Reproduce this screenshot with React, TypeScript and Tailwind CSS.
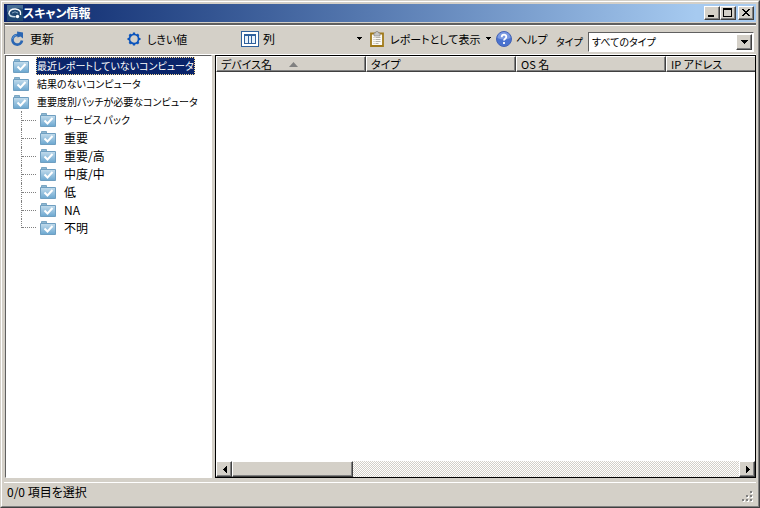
import type { ReactNode } from 'react'

const columns = ['デバイス名', 'タイプ', 'OS 名', 'IP アドレス']
const topFolders = ['最近レポートしていないコンピュータ', '結果のないコンピュータ', '重要度別パッチが必要なコンピュータ']
const severities = ['サービス パック', '重要', '重要/高', '中度/中', '低', 'NA', '不明']

const raised = 'border border-t-white border-l-white border-r-[#404040] border-b-[#404040] bg-[#d4d0c8] shadow-[inset_-1px_-1px_0_#808080]'

function FolderIcon() {
  return (
    <svg className="h-4 w-4 shrink-0" viewBox="0 0 16 16" aria-hidden="true">
      <defs>
        <linearGradient id="folder" x1="0" y1="0" x2="0" y2="1">
          <stop offset="0" stopColor="#c3dcec" />
          <stop offset="1" stopColor="#6ba7d0" />
        </linearGradient>
      </defs>
      <path d="M1.5 4V1.500h5V4" fill="#8eb8d3" stroke="#7ba6c2" />
      <path d="M.5 3.500h15v11H.5z" fill="url(#folder)" stroke="#6f9fc1" />
      <path d="m4.500 8.500 3 3L12.500 6" fill="none" stroke="#fff" strokeWidth="2" />
    </svg>
  )
}

function AppIcon() {
  return (
    <svg className="h-4 w-4 shrink-0" viewBox="0 0 16 16" aria-hidden="true">
      <path d="M0 0h16v16H0z" fill="#1d4670" />
      <path d="M0 0h16v4Q8 1 0 7z" fill="#456c93" />
      <path d="M2 9C1.500 5.500 5 3.800 8.500 4c4 .3 5.800 2.500 5 6" fill="none" stroke="#fff" strokeWidth="1.400" />
      <path d="M2 8.500c.5 2.500 3 3.500 6.500 3.200" fill="none" stroke="#c9dbe8" strokeWidth="1.500" />
      <path d="M5 8q3-2.500 6 0" fill="none" stroke="#86a7c2" strokeWidth="1" />
      <circle cx="10.500" cy="11.500" r="1.700" fill="#fff" />
    </svg>
  )
}

function RefreshIcon() {
  return (
    <svg className="h-4 w-4 shrink-0" viewBox="0 0 16 16" aria-hidden="true">
      <path d="M8.500 4.200A4.800 4.800 0 1 0 12 9.500" fill="none" stroke="#2a66b3" strokeWidth="2.600" />
      <path d="M7 .5 13 1.500v6L10.500 5.500 7.500 6.500z" fill="#2a66b3" />
      <path d="M2.500 8a5 5 0 0 1 4-4.200" fill="none" stroke="#5f97d3" strokeWidth="1" />
    </svg>
  )
}

function GearIcon() {
  return (
    <svg className="h-3.5 w-3.5 shrink-0" viewBox="0 0 14 14" aria-hidden="true">
      <circle cx="7" cy="7" r="4.600" fill="none" stroke="#0d55bc" strokeWidth="1.800" />
      <path d="M7 .5v2M7 11.500v2M.5 7h2M11.500 7h2M2.400 2.400l1.500 1.500M10.100 10.100l1.500 1.500M2.400 11.600l1.500-1.500M10.100 3.900l1.500-1.500" stroke="#0d55bc" strokeWidth="2.200" />
    </svg>
  )
}

function ColumnsIcon() {
  return (
    <svg className="h-4 w-[18px] shrink-0" viewBox="0 0 18 16" shapeRendering="crispEdges" aria-hidden="true">
      <path d="M.5.5h17v15H.5z" fill="#fff" stroke="#2f609c" />
      <path d="M3.500 3.500h11v9h-11z" fill="#e8f1fa" stroke="#2f609c" />
      <path d="M3 3h12v2H3zM7 4h1v9H7zM10 4h1v9h-1z" fill="#2f609c" />
    </svg>
  )
}

function ClipboardIcon() {
  return (
    <svg className="h-4 w-3.5 shrink-0" viewBox="0 0 14 16" aria-hidden="true">
      <path d="M1 2.500h12v12.500H1z" fill="#fbfaf5" stroke="#a17a1a" strokeWidth="1.800" />
      <path d="M4 2h1.500L6 .5h2L8.500 2H10v3H4z" fill="#c6c6c6" stroke="#7d7d78" strokeWidth=".6" />
      <path d="M3.500 6.500h1m1 0h5m-7 2h1m1 0h5m-7 2h1m1 0h5m-7 2h1m1 0h3" stroke="#b5b3aa" />
    </svg>
  )
}

function HelpIcon() {
  return (
    <svg className="h-4 w-4 shrink-0" viewBox="0 0 16 16" aria-hidden="true">
      <circle cx="8" cy="8" r="7.500" fill="#4a72cf" stroke="#4563b3" />
      <path d="M1.500 7a6.500 6 0 0 1 13 0Q8 10 1.500 7z" fill="#7c9ae2" />
      <path d="M5.700 6.200C5.700 2.800 10.500 3 10.300 6 10.200 7.700 8 7.700 8 9.500M8 11v2" fill="none" stroke="#fff" strokeWidth="1.800" />
    </svg>
  )
}

function Arrow({ dir }: { dir: 'left' | 'right' | 'down' }) {
  const d = { left: 'M5 0h1v7H5zM4 1h1v5H4zM3 2h1v3H3zM2 3h1v1H2z', right: 'M2 0h1v7H2zM3 1h1v5H3zM4 2h1v3H4zM5 3h1v1H5z', down: 'M0 2h7v1H0zM1 3h5v1H1zM2 4h3v1H2zM3 5h1v1H3z' }[dir]
  return (
    <svg className="h-[7px] w-[7px]" viewBox="0 0 7 7" shapeRendering="crispEdges" aria-hidden="true">
      <path d={d} />
    </svg>
  )
}

function Caret() {
  return (
    <svg className="h-[3px] w-[5px] shrink-0" viewBox="0 0 5 3" shapeRendering="crispEdges" aria-hidden="true">
      <path d="M0 0h5v1H0zM1 1h3v1H1zM2 2h1v1H2z" />
    </svg>
  )
}

function CaptionButton({ label, children }: { label: string; children: ReactNode }) {
  return (
    <button aria-label={label} className={`flex h-3.5 w-4 items-center justify-center ${raised}`}>
      <svg className="h-[10px] w-3" viewBox="0 0 12 10" shapeRendering="crispEdges" aria-hidden="true">{children}</svg>
    </button>
  )
}

function TitleBar() {
  return (
    <header className="mx-0.5 flex h-[18px] items-center bg-linear-to-r from-[#0a246a] to-[#a6caf0] to-92% pr-0.5 pl-[3px]">
      <AppIcon />
      <h1 className="flex-1 text-[12px] font-bold text-white">スキャン情報</h1>
      <CaptionButton label="最小化"><path d="M2 7h6v2H2z" /></CaptionButton>
      <CaptionButton label="最大化"><path d="M1 0h9v9H1zM2 2v6h7V2z" fillRule="evenodd" /></CaptionButton>
      <div className="w-0.5" />
      <CaptionButton label="閉じる"><path d="M2 1h2v1h1v1h2V2h1V1h2v1H9v1H8v1H7v1h1v1h1v1h1v1H8V7H7V6H5v1H4v1H2V7h1V6h1V5h1V4H4V3H3V2H2z" /></CaptionButton>
    </header>
  )
}

function Toolbar() {
  return (
    <div role="toolbar" className="mx-0.5 mt-px flex h-[31px] items-center border-t-2 border-l border-t-[#606060] border-l-[#808080] pr-0.5 pb-0.5 pl-[5px] shadow-[inset_0_1px_0_#ffffff]">
      <button className="flex w-[117px] shrink-0 items-center gap-1"><RefreshIcon />更新</button>
      <button className="flex w-[114px] shrink-0 items-center gap-1.5 text-[11px]"><GearIcon />しきい値</button>
      <button className="flex w-[129px] shrink-0 items-center gap-1"><ColumnsIcon />列<span className="ml-auto pr-2"><Caret /></span></button>
      <button className="flex w-[126px] shrink-0 items-center gap-1.5 text-[11px] whitespace-nowrap"><ClipboardIcon />レポートとして表示<span className="ml-auto pr-2"><Caret /></span></button>
      <button className="flex w-[60px] shrink-0 items-center gap-1 text-[11px] whitespace-nowrap"><HelpIcon />ヘルプ</button>
      <label htmlFor="type" className="mt-1.5 w-8 shrink-0 text-[10px] whitespace-nowrap">タイプ</label>
      <div className="relative mt-1.5 h-5 min-w-0 flex-1 border border-t-[#606060] border-r-white border-b-white border-l-[#606060] bg-white">
        <select id="type" className="block h-full w-full appearance-none bg-white pl-[3px] text-[10px] outline-none">
          <option>すべてのタイプ</option>
        </select>
        <span className={`pointer-events-none absolute top-px right-px bottom-px flex w-4 items-center justify-center ${raised}`}><Arrow dir="down" /></span>
      </div>
    </div>
  )
}

function FolderTree() {
  return (
    <nav aria-label="フォルダ" className="w-[207px] shrink-0 overflow-hidden border border-t-[#606060] border-r-white border-b-white border-l-[#606060] bg-white pt-px whitespace-nowrap">
      <ul>
        {topFolders.map((name, i) => (
          <li key={name} className="flex h-[18px] items-center gap-[7px] pl-[7px] text-[10px]">
            <FolderIcon />
            <button className={i === 0 ? 'h-[18px] border border-dotted border-[#f5db95] bg-[#0a246a] text-white' : 'h-[18px] border border-transparent'}>{name}</button>
          </li>
        ))}
      </ul>
      <ul className="pl-[15px]">
        {severities.map((name, i) => (
          <li key={name} className="flex h-[18px] items-center">
            <span className={`flex w-[19px] shrink-0 items-center border-l border-dotted border-[#808080] ${i === severities.length - 1 ? 'h-[9px] self-start items-end' : 'h-full'}`}>
              <span className="w-3.5 border-t border-dotted border-[#808080]" />
            </span>
            <FolderIcon />
            <button className={i === 0 ? 'ml-2 text-[10px]' : 'ml-2'}>{name}</button>
          </li>
        ))}
      </ul>
    </nav>
  )
}

function DeviceList() {
  return (
    <section className="flex min-w-0 flex-1 flex-col border border-black bg-white">
      <div className="min-h-0 flex-1 overflow-hidden">
        <table className="w-[600px] table-fixed border-separate border-spacing-0">
          <thead>
            <tr>
              {columns.map((name, i) => (
                <th key={name} scope="col" className={`h-4 p-0 pl-1 text-left text-[11px] leading-[14px] font-normal ${raised}`}>
                  <span className="flex items-center">
                    {name}
                    {i === 0 && (
                      <svg className="ml-[17px] h-[5px] w-[9px]" viewBox="0 0 9 5" aria-hidden="true"><path d="M0 5 4.500 0 9 5z" fill="#808080" /></svg>
                    )}
                  </span>
                </th>
              ))}
            </tr>
          </thead>
          <tbody />
        </table>
      </div>
      <div className="flex h-4 bg-[repeating-conic-gradient(#ffffff_0_25%,#d4d0c8_0_50%)] bg-size-[2px_2px]">
        <button aria-label="左へスクロール" className={`flex w-4 items-center justify-center ${raised}`}><Arrow dir="left" /></button>
        <div className={`w-[121px] ${raised}`} />
        <button aria-label="右へスクロール" className={`ml-auto flex w-4 items-center justify-center ${raised}`}><Arrow dir="right" /></button>
      </div>
    </section>
  )
}

function StatusBar() {
  return (
    <footer className="mx-0.5 mt-1 flex h-6 justify-between border-t border-white">
      <p className="pt-px pl-[3px]">0/0 項目を選択</p>
      <svg className="mt-2 mr-0.5 h-3 w-3" viewBox="0 0 12 12" shapeRendering="crispEdges" aria-hidden="true">
        <path d="M9 1h2v2H9zM5 5h2v2H5zM9 5h2v2H9zM1 9h2v2H1zM5 9h2v2H5zM9 9h2v2H9z" fill="#fff" />
        <path d="M8 0h2v2H8zM4 4h2v2H4zM8 4h2v2H8zM0 8h2v2H0zM4 8h2v2H4zM8 8h2v2H8z" fill="#808080" />
      </svg>
    </footer>
  )
}

export default function App() {
  return (
    <div className="border border-t-[#d4d0c8] border-r-[#404040] border-b-[#404040] border-l-[#d4d0c8] bg-[#d4d0c8] font-['Noto_Sans_CJK_JP',sans-serif] text-[12px] leading-4 text-black [font-feature-settings:'palt']">
      <div className="flex min-h-[calc(100vh-2px)] flex-col border border-t-white border-r-[#808080] border-b-[#808080] border-l-white pt-0.5">
        <TitleBar />
        <Toolbar />
        <main className="mx-0.5 flex flex-1 gap-[3px] border-t border-white pl-px">
          <FolderTree />
          <DeviceList />
        </main>
        <StatusBar />
      </div>
    </div>
  )
}
